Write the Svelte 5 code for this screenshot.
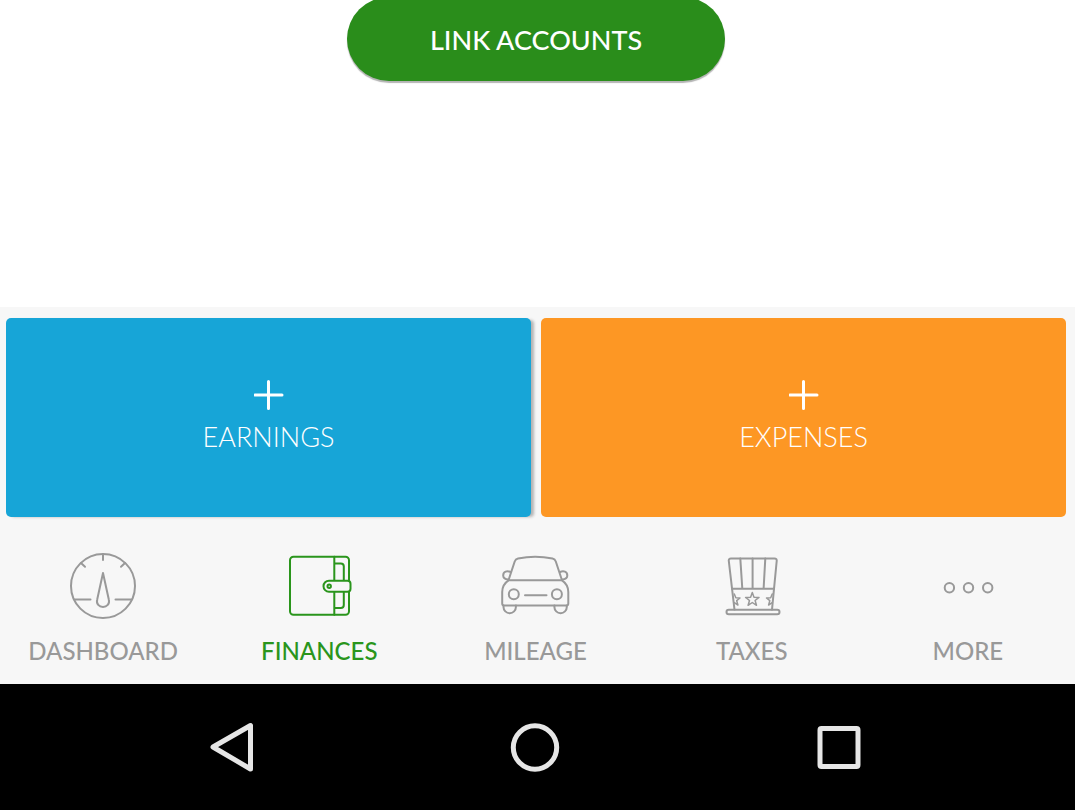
<script>
  let active = $state('finances');

  const tabs = [
    { id: 'dashboard', label: 'DASHBOARD' },
    { id: 'finances', label: 'FINANCES' },
    { id: 'mileage', label: 'MILEAGE' },
    { id: 'taxes', label: 'TAXES' },
    { id: 'more', label: 'MORE' }
  ];
</script>

<div class="screen">
  <main>
    <button class="link" type="button">LINK ACCOUNTS</button>
  </main>

  <div class="dock">
    <div class="tiles">
      {#each ['EARNINGS', 'EXPENSES'] as name}
        <button class="tile {name.toLowerCase()}" type="button">
          <svg width="30" height="30" viewBox="0 0 30 30" aria-hidden="true">
            <path d="M14.500 1.500v27M1 15h27" />
          </svg>
          <span>{name}</span>
        </button>
      {/each}
    </div>

    <nav>
      {#each tabs as tab}
        <button
          class="tab"
          class:active={active === tab.id}
          type="button"
          aria-current={active === tab.id ? 'page' : undefined}
          onclick={() => (active = tab.id)}
        >
          <svg width="80" height="80" viewBox="0 0 80 80" aria-hidden="true">
            {#if tab.id === 'dashboard'}
              <circle cx="40" cy="40" r="32" />
              <path d="M40 8v6M18 17l4 3.7M62 17l-4 3.7M11.5 53.6H27.5M52.5 53.6H68.5" />
              <path d="M40 27L34.2 53.5C33 58 36.2 61 40 61S47 58 45.8 53.5Z" />
            {:else if tab.id === 'finances'}
              <rect x="11" y="10.7" width="59" height="58" rx="3.5" />
              <path d="M55.3 10.7v58M55.3 17.5h6.500q3 0 3 3V59q0 3-3 3H55.3" />
              <path class="solid" d="M50 34.7h18.500q3 0 3 3v5q0 3-3 3H50a5.500 5.500 0 0 1 0-11Z" />
              <circle cx="50.2" cy="40.2" r="1.7" />
            {:else if tab.id === 'mileage'}
              <path d="M13.5 34.3L19.7 15.5Q20.5 13 23 12.5Q40.2 9 57.5 12.5Q60 13 60.8 15.5L67 34.3" />
              <path d="M13.5 34.3H67Q73.3 38.5 73.3 46V57.5Q73.3 59.4 71.5 59.4H9Q7.2 59.4 7.2 57.5V46Q7.2 38.5 13.5 34.3Z" />
              <path d="M15.5 26C12 24.500 8.200 25.500 8.200 29.500Q8.200 33 13.200 33.500M65 26C68.500 24.500 72.300 25.500 72.300 29.500Q72.300 33 67.300 33.500" />
              <circle cx="18.8" cy="48.3" r="5" />
              <circle cx="61.9" cy="48.3" r="5" />
              <path d="M30 49.200H51.500M8.500 59.500V61a6.200 6.200 0 0 0 12.400 0V59.500M59.400 59.500V61a6.200 6.200 0 0 0 12.400 0V59.500" />
            {:else if tab.id === 'taxes'}
              <path d="M22.5 63.6L16.8 15Q16.5 12.4 19 12.4H62.500Q65 12.400 64.700 15L60 63.600" />
              <path d="M20 42.7H62M28.3 12.4L30.3 42.7M40.6 12.4V42.7M53.3 12.4L51.6 42.7" />
              <rect x="14.5" y="63.7" width="53" height="4.6" rx="2.3" />
              <path class="thin" d="M40.300 46.500L42 51.200L47 51.400L43.100 54.500L44.500 59.300L40.300 56.500L36.100 59.300L37.500 54.500L33.600 51.400L38.600 51.200Z" />
              <path class="thin" d="M22.300 48L23.800 51.800L28 52L24.700 54.700L25.900 59L22.300 56.700M60.200 48L58.700 51.800L54.500 52L57.800 54.700L56.600 59L60.200 56.700" />
            {:else}
              <circle cx="21.4" cy="41.7" r="4.7" />
              <circle cx="40.5" cy="41.7" r="4.7" />
              <circle cx="59.7" cy="41.7" r="4.7" />
            {/if}
          </svg>
          <span>{tab.label}</span>
        </button>
      {/each}
    </nav>
  </div>

  <footer>
    <button type="button" aria-label="Back">
      <svg width="50" height="50" viewBox="0 0 50 50"><path d="M6 25L43.5 3.5V47Z" /></svg>
    </button>
    <button type="button" aria-label="Home">
      <svg width="50" height="50" viewBox="0 0 50 50"><circle cx="25" cy="25.5" r="21.7" /></svg>
    </button>
    <button type="button" aria-label="Recent apps">
      <svg width="50" height="50" viewBox="0 0 50 50"><rect x="6" y="6.5" width="38" height="38" rx="1.5" /></svg>
    </button>
  </footer>
</div>

<style>
  :global(body) {
    margin: 0;
    background: #fff;
  }
  .screen {
    display: flex;
    flex-direction: column;
    min-height: 100vh;
    overflow: hidden;
    font-family: Lato, 'Open Sans', sans-serif;
  }
  button {
    margin: 0;
    padding: 0;
    border: 0;
    background: none;
    font: inherit;
    color: inherit;
    cursor: pointer;
  }
  svg {
    display: block;
    fill: none;
    stroke: currentColor;
    stroke-linecap: round;
    stroke-linejoin: round;
  }
  main {
    flex: 1;
    display: flex;
    justify-content: center;
    align-items: flex-start;
    padding-right: 3px;
  }
  .link {
    width: 378px;
    height: 84px;
    margin-top: -3px;
    border-radius: 42px;
    background: #2a8d1b;
    box-shadow: 0 2px 1px #b4b4b4;
    color: #fff;
    font-size: 27px;
    font-weight: 500;
  }
  .dock {
    background: #f7f7f7;
  }
  .tiles {
    display: grid;
    grid-template-columns: 1fr 1fr;
    gap: 10px;
    padding: 11px 9px 0 6px;
  }
  .tile {
    display: flex;
    flex-direction: column;
    align-items: center;
    justify-content: center;
    gap: 11px;
    height: 199px;
    padding-bottom: 3px;
    box-sizing: border-box;
    border-radius: 5px;
    color: #fff;
    font-size: 27px;
    font-weight: 300;
    line-height: 32px;
  }
  .tile svg {
    stroke-width: 3;
  }
  .earnings {
    background: #17a5d7;
    box-shadow: 4px 1px 3px -1px #b4b4b4;
  }
  .expenses {
    background: #fd9724;
  }
  nav {
    display: grid;
    grid-template-columns: repeat(5, 1fr);
    margin: 0 -1px 0 -5px;
    padding: 29px 0 19px;
  }
  .tab {
    display: flex;
    flex-direction: column;
    align-items: center;
    gap: 11px;
    color: #999;
    font-size: 24px;
    font-weight: 500;
    line-height: 28px;
  }
  .tab svg {
    stroke-width: 2;
  }
  .tab.active {
    color: #2a951c;
  }
  .solid {
    fill: #f7f7f7;
  }
  .thin {
    stroke-width: 1.5;
  }
  footer {
    display: grid;
    grid-template-columns: repeat(3, 1fr);
    height: 126px;
    padding: 0 84px 0 80px;
    background: #000;
    color: #e6e6e6;
  }
  footer button {
    display: grid;
    place-items: center;
  }
  footer svg {
    stroke-width: 5;
  }
</style>
